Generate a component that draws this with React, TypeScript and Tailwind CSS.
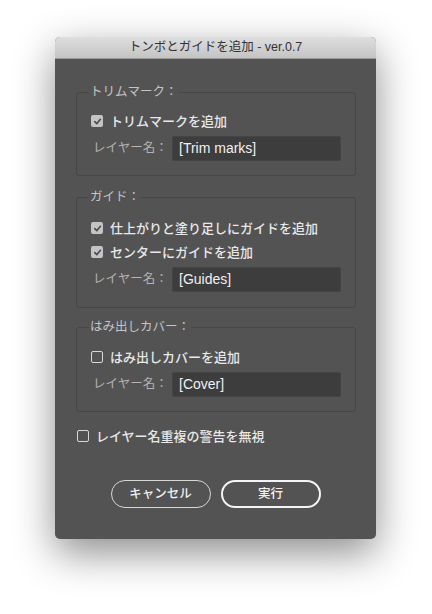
import React from "react";

const font = { fontFamily: '"Liberation Sans", "Noto Sans CJK JP", "Noto Sans", sans-serif' };

const CheckBox = ({ checked }: { checked: boolean }) =>
  checked ? (
    <span className="flex h-[12px] w-[12px] items-center justify-center rounded-[2px] bg-[#c4c4c4]">
      <svg width="9" height="9" viewBox="0 0 10 10" fill="none">
        <path d="M2 5.2 L4.2 7.4 L8.2 2.6" stroke="#4a4a4a" strokeWidth="1.8" strokeLinecap="round" strokeLinejoin="round" />
      </svg>
    </span>
  ) : (
    <span className="block h-[12px] w-[12px] rounded-[2px] border border-[#d8d8d8]" />
  );

const CheckRow = ({ label, checked }: { label: string; checked: boolean }) => (
  <div className="flex h-5 items-center gap-[7px]">
    <CheckBox checked={checked} />
    <span className="text-[13px] font-medium leading-none text-[#e8e8e8]">{label}</span>
  </div>
);

const LayerRow = ({ value }: { value: string }) => (
  <div className="flex items-center">
    <span className="ml-[2px] w-[79px] text-[12.5px] leading-none text-[#b4b4b4]">レイヤー名：</span>
    <div className="flex h-[25px] flex-1 items-center rounded-[2px] border border-[#444] bg-[#3d3d3d] px-[6px] text-[14px] text-[#f0f0f0]">
      {value}
    </div>
  </div>
);

const Group = ({ title, children, pt, pb }: { title: string; children: React.ReactNode; pt: string; pb: string }) => (
  <fieldset className={`rounded-[3px] border border-[#474747] px-[14px] ${pt} ${pb}`}>
    <legend className="ml-[-2px] px-[1px] text-[12.5px] leading-[14px] text-[#c4c4c4]">{title}</legend>
    {children}
  </fieldset>
);

export default function App() {
  return (
    <div className="min-h-[614px] bg-white pl-[55px] pt-[37px]" style={font}>
      <div className="flex h-[502px] w-[321px] flex-col overflow-hidden rounded-[5px] bg-[#535353] shadow-[0_14px_40px_rgba(0,0,0,0.45)]">
        {/* title bar */}
        <div className="flex h-[22px] shrink-0 items-center justify-center border-b border-[#9c9c9c] bg-linear-to-b from-[#dedede] to-[#c4c4c4] text-[12.5px] text-[#333]">
          トンボとガイドを追加 - ver.0.7
        </div>

        <div className="flex flex-col px-[21px] pr-[20px] pt-[26px]">
          <Group title="トリムマーク：" pt="pt-[12px]" pb="pb-[14px]">
            <div className="flex flex-col gap-[5px]">
              <CheckRow label="トリムマークを追加" checked />
              <LayerRow value="[Trim marks]" />
            </div>
          </Group>

          <div className="mt-[14px]">
            <Group title="ガイド：" pt="pt-[14px]" pb="pb-[15px]">
              <div className="flex flex-col gap-[4px]">
                <CheckRow label="仕上がりと塗り足しにガイドを追加" checked />
                <CheckRow label="センターにガイドを追加" checked />
                <div className="mt-[1px]">
                  <LayerRow value="[Guides]" />
                </div>
              </div>
            </Group>
          </div>

          <div className="mt-[12px]">
            <Group title="はみ出しカバー：" pt="pt-[13px]" pb="pb-[14px]">
              <div className="flex flex-col gap-[5px]">
                <CheckRow label="はみ出しカバーを追加" checked={false} />
                <LayerRow value="[Cover]" />
              </div>
            </Group>
          </div>

          <div className="mt-[14px] pl-[1px]">
            <CheckRow label="レイヤー名重複の警告を無視" checked={false} />
          </div>

          <div className="mt-[34px] flex justify-center gap-[10px] pr-[1px]">
            <button className="flex h-[28px] w-[100px] items-center justify-center rounded-full border border-[#d6d6d6] text-[12.5px] font-medium text-[#f0f0f0]">
              キャンセル
            </button>
            <button className="flex h-[28px] w-[100px] items-center justify-center rounded-full border-2 border-[#f4f4f4] text-[12.5px] font-medium text-[#f4f4f4]">
              実行
            </button>
          </div>
        </div>
      </div>
    </div>
  );
}
